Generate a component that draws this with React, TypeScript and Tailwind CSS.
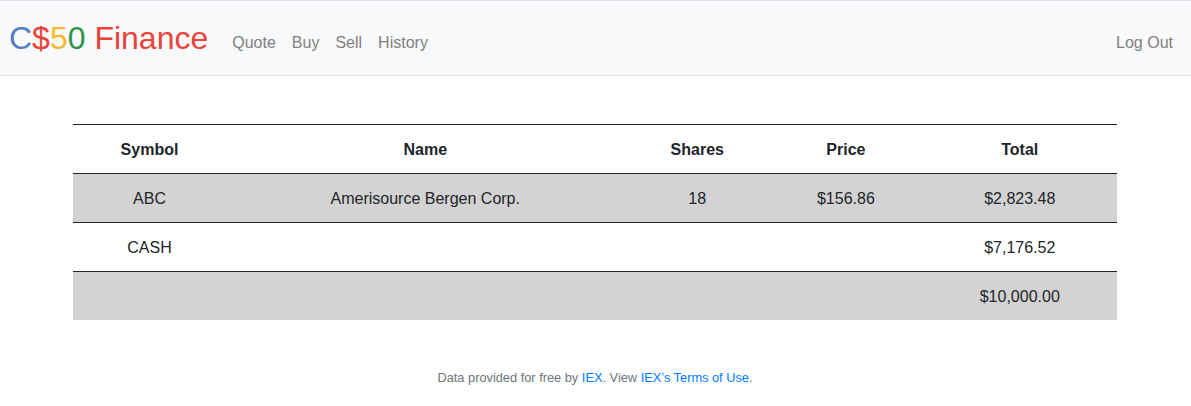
const columns = [
  { title: "Symbol", pad: "" },
  { title: "Name", pad: "pr-[0.5px]" },
  { title: "Shares", pad: "pr-[0.5px]" },
  { title: "Price", pad: "pr-[0.25px]" },
  { title: "Total", pad: "pl-[0.5px]" },
];

const rows = [
  ["ABC", "Amerisource Bergen Corp.", "18", "$156.86", "$2,823.48"],
  ["CASH", "", "", "", "$7,176.52"],
  ["", "", "", "", "$10,000.00"],
];

export default function App() {
  return (
    <div className="min-h-[406px] bg-white font-['Liberation_Sans',sans-serif] text-base leading-6 text-[#212529]">
      <nav className="flex h-[76px] items-center border-y border-[#dee2e6] bg-[#f8f9fa] pl-[9px] pr-[18px]">
        <a className="mr-6 whitespace-nowrap text-[32px] leading-[48px]">
          <span className="text-[#537fbe]">C</span>
          <span className="text-[#ea433b]">$</span>
          <span className="text-[#f5b82e]">5</span>
          <span className="text-[#2e944b]">0</span>
          <span className="text-[#ea433b]"> Finance</span>
        </a>
        <ul className="flex flex-1 gap-4 pt-[10px] text-[#808080]">
          <li>Quote</li>
          <li>Buy</li>
          <li>Sell</li>
          <li>History</li>
          <li className="ml-auto">Log Out</li>
        </ul>
      </nav>
      <main className="ml-[73px] w-[1044px] pt-12">
        <table className="w-full table-fixed border-separate border-spacing-0">
          <colgroup>
            <col className="w-[153px]" />
            <col className="w-[399px]" />
            <col className="w-[145px]" />
            <col className="w-[152px]" />
            <col className="w-[195px]" />
          </colgroup>
          <thead>
            <tr>
              {columns.map(({ title, pad }) => (
                <th key={title} className={`h-[49px] border-t border-[#212529] pt-[2px] text-center font-bold ${pad}`}>
                  {title}
                </th>
              ))}
            </tr>
          </thead>
          <tbody>
            {rows.map((row, r) => (
              <tr key={r} className="odd:bg-[#d3d3d3]">
                {row.map((text, c) => (
                  <td key={c} className={`h-[49px] border-t border-[#212529] pb-0 pt-[2px] text-center ${columns[c].pad}`}>
                    {text}
                  </td>
                ))}
              </tr>
            ))}
          </tbody>
        </table>
      </main>
      <footer className="mt-12 pr-px text-center text-[12.8px] leading-[19px] text-[#6c757d]">
        Data provided for free by <a className="text-[#007bff]">IEX</a>. View{" "}
        <a className="text-[#007bff]">IEX’s Terms of Use</a>.
      </footer>
    </div>
  );
}
